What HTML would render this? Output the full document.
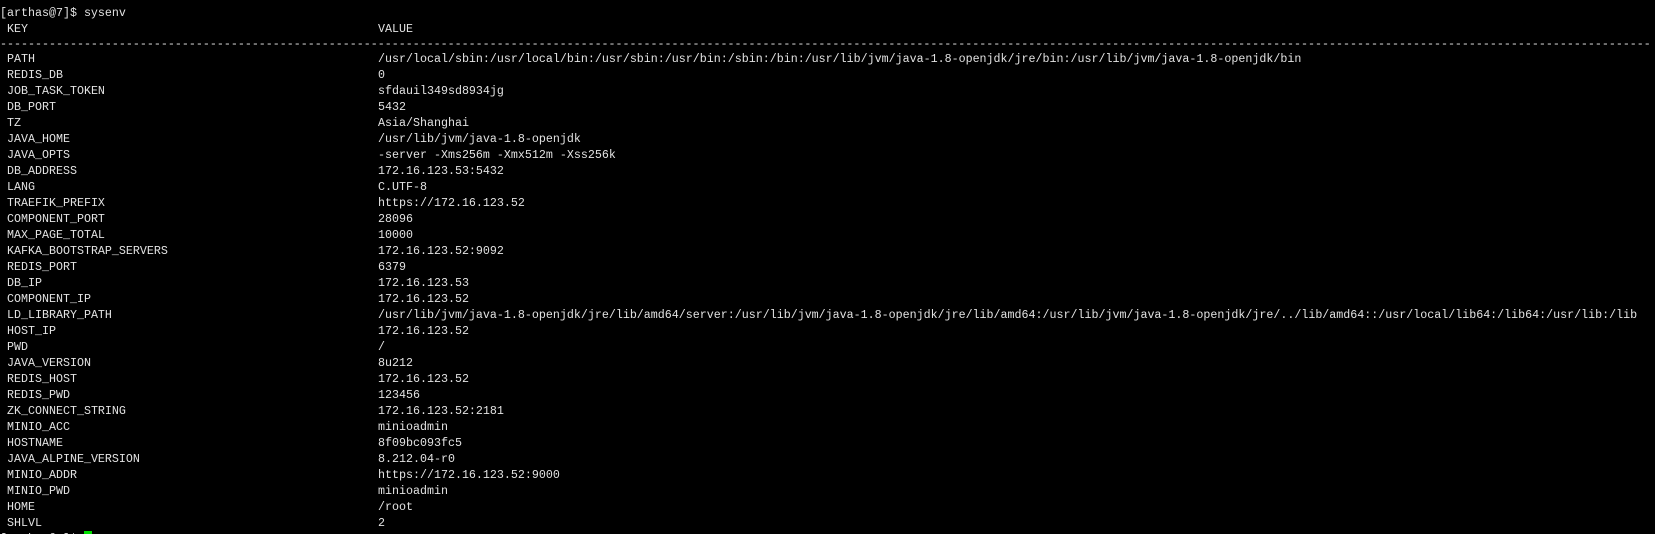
<!DOCTYPE html>
<html><head><meta charset="utf-8"><style>
html,body{margin:0;padding:0;background:#000;width:1655px;height:534px;overflow:hidden}
body{position:relative}
#t{position:absolute;left:0;top:5px;font-family:"Liberation Mono","Courier New",monospace;font-size:11.67px;color:#e2e2e2}
.r{height:16px;line-height:16px;position:relative;white-space:pre}
.k{position:absolute;left:7px}
.v{position:absolute;left:378px}
.cur{display:inline-block;width:8px;height:16px;background:#00e000;vertical-align:top}
</style></head><body>
<div id="t"><div class="r">[arthas@7]$ sysenv</div><div class="r" style="height:15px"><span class="k">KEY</span><span class="v">VALUE</span></div><div class="r" style="height:15px">--------------------------------------------------------------------------------------------------------------------------------------------------------------------------------------------------------------------------------------------</div><div class="r"><span class="k">PATH</span><span class="v">/usr/local/sbin:/usr/local/bin:/usr/sbin:/usr/bin:/sbin:/bin:/usr/lib/jvm/java-1.8-openjdk/jre/bin:/usr/lib/jvm/java-1.8-openjdk/bin</span></div><div class="r"><span class="k">REDIS_DB</span><span class="v">0</span></div><div class="r"><span class="k">JOB_TASK_TOKEN</span><span class="v">sfdauil349sd8934jg</span></div><div class="r"><span class="k">DB_PORT</span><span class="v">5432</span></div><div class="r"><span class="k">TZ</span><span class="v">Asia/Shanghai</span></div><div class="r"><span class="k">JAVA_HOME</span><span class="v">/usr/lib/jvm/java-1.8-openjdk</span></div><div class="r"><span class="k">JAVA_OPTS</span><span class="v">-server -Xms256m -Xmx512m -Xss256k</span></div><div class="r"><span class="k">DB_ADDRESS</span><span class="v">172.16.123.53:5432</span></div><div class="r"><span class="k">LANG</span><span class="v">C.UTF-8</span></div><div class="r"><span class="k">TRAEFIK_PREFIX</span><span class="v">https://172.16.123.52</span></div><div class="r"><span class="k">COMPONENT_PORT</span><span class="v">28096</span></div><div class="r"><span class="k">MAX_PAGE_TOTAL</span><span class="v">10000</span></div><div class="r"><span class="k">KAFKA_BOOTSTRAP_SERVERS</span><span class="v">172.16.123.52:9092</span></div><div class="r"><span class="k">REDIS_PORT</span><span class="v">6379</span></div><div class="r"><span class="k">DB_IP</span><span class="v">172.16.123.53</span></div><div class="r"><span class="k">COMPONENT_IP</span><span class="v">172.16.123.52</span></div><div class="r"><span class="k">LD_LIBRARY_PATH</span><span class="v">/usr/lib/jvm/java-1.8-openjdk/jre/lib/amd64/server:/usr/lib/jvm/java-1.8-openjdk/jre/lib/amd64:/usr/lib/jvm/java-1.8-openjdk/jre/../lib/amd64::/usr/local/lib64:/lib64:/usr/lib:/lib</span></div><div class="r"><span class="k">HOST_IP</span><span class="v">172.16.123.52</span></div><div class="r"><span class="k">PWD</span><span class="v">/</span></div><div class="r"><span class="k">JAVA_VERSION</span><span class="v">8u212</span></div><div class="r"><span class="k">REDIS_HOST</span><span class="v">172.16.123.52</span></div><div class="r"><span class="k">REDIS_PWD</span><span class="v">123456</span></div><div class="r"><span class="k">ZK_CONNECT_STRING</span><span class="v">172.16.123.52:2181</span></div><div class="r"><span class="k">MINIO_ACC</span><span class="v">minioadmin</span></div><div class="r"><span class="k">HOSTNAME</span><span class="v">8f09bc093fc5</span></div><div class="r"><span class="k">JAVA_ALPINE_VERSION</span><span class="v">8.212.04-r0</span></div><div class="r"><span class="k">MINIO_ADDR</span><span class="v">https://172.16.123.52:9000</span></div><div class="r"><span class="k">MINIO_PWD</span><span class="v">minioadmin</span></div><div class="r"><span class="k">HOME</span><span class="v">/root</span></div><div class="r"><span class="k">SHLVL</span><span class="v">2</span></div><div class="r">[arthas@7]$ <span class="cur"></span></div></div>
</body></html>
